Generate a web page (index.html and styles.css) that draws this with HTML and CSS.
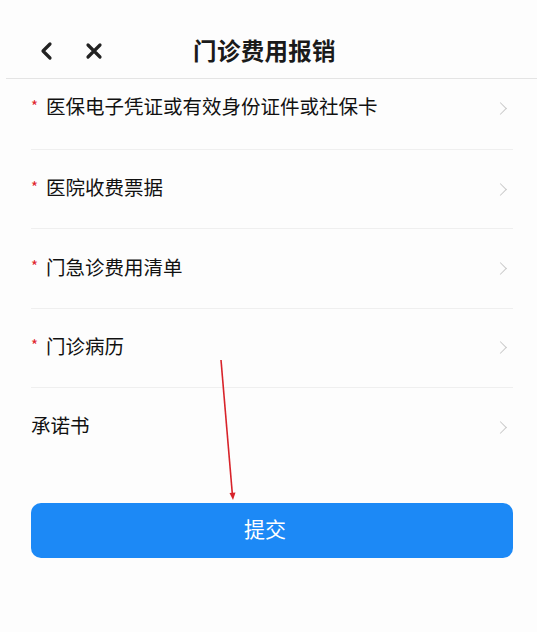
FILE: index.html
```html
<!DOCTYPE html>
<html>
<head>
    <meta charset="UTF-8">
    <title>门诊费用报销</title>
    <link rel="stylesheet" href="styles.css">
</head>
<body>
    <div class="page">
        <div class="header">
            <div class="nav">
                <svg class="nav-icon" width="18" height="20" viewBox="0 0 18 20">
                    <path d="M12 3 L5 10 L12 17" fill="none" stroke="#222" stroke-width="3.2" stroke-linecap="round" stroke-linejoin="round"/>
                </svg>
                <svg class="nav-icon" width="20" height="20" viewBox="0 0 20 20">
                    <path d="M4 4 L16 16 M16 4 L4 16" fill="none" stroke="#222" stroke-width="3.2" stroke-linecap="round"/>
                </svg>
            </div>
            <h1 class="title">门诊费用报销</h1>
            <div></div>
        </div>

        <ul class="list">
            <li class="row row-first"><span class="label"><i class="req">*</i>医保电子凭证或有效身份证件或社保卡</span><span class="chev"></span></li>
            <li class="row"><span class="label"><i class="req">*</i>医院收费票据</span><span class="chev"></span></li>
            <li class="row"><span class="label"><i class="req">*</i>门急诊费用清单</span><span class="chev"></span></li>
            <li class="row"><span class="label"><i class="req">*</i>门诊病历</span><span class="chev"></span></li>
            <li class="row"><span class="label">承诺书</span><span class="chev"></span></li>
        </ul>

        <button class="submit">提交</button>

        <!-- red annotation arrow drawn over the page -->
        <svg class="mark" width="537" height="632" viewBox="0 0 537 632">
            <path d="M221 360 L232.5 496" stroke="#d8232a" stroke-width="1.6" fill="none"/>
            <path d="M229.5 493 L233 500 L235.5 492.5 Z" fill="#d8232a"/>
        </svg>
    </div>
</body>
</html>
```

FILE: styles.css
```css
* {
    margin: 0;
    padding: 0;
    box-sizing: border-box;
}

body {
    background: #fdfdfd;
    color: #1a1a1a;
    font-family: "Noto Sans CJK SC", "Noto Sans", sans-serif;
    width: 537px;
    height: 632px;
    overflow: hidden;
}

.page {
    position: relative;
    height: 100%;
}

.header {
    height: 79px;
    margin-left: 6px;
    border-bottom: 1px solid #e4e4e4;
    display: grid;
    grid-template-columns: 1fr auto 1fr;
    align-items: center;
    padding-top: 24px;
}

.nav {
    display: flex;
    align-items: center;
    gap: 28px;
    padding-left: 32px;
}

.title {
    font-size: 23.5px;
    font-weight: 700;
    line-height: 1;
    color: #1a1a1a;
    letter-spacing: 0.3px;
    margin-right: 14px;
}

.list {
    list-style: none;
    margin: 0 24px 0 31px;
}

.row {
    height: 79.3px;
    display: flex;
    align-items: center;
    justify-content: space-between;
    border-top: 1px solid #efefef;
    padding-right: 8px;
    padding-bottom: 4px;
}

.row-first {
    height: 70px;
    padding-bottom: 16px;
    border-top: none;
}

.label {
    font-size: 19.5px;
    line-height: 1;
    color: #111;
    display: flex;
    align-items: center;
}

.req {
    font-style: normal;
    color: #e0242b;
    font-size: 15px;
    width: 15px;
    margin-top: -2px;
}

.chev {
    width: 9px;
    height: 9px;
    border-top: 1.5px solid #c9c9c9;
    border-right: 1.5px solid #c9c9c9;
    transform: rotate(45deg);
    margin-top: 4px;
}

.submit {
    display: block;
    margin: 37px 24px 0 31px;
    width: 482px;
    height: 55px;
    border: none;
    border-radius: 10px;
    background: #1c89f6;
    color: #fff;
    font-family: inherit;
    font-size: 21px;
    line-height: 1;
    padding: 0 14px 5px 0;
}

.mark {
    position: absolute;
    top: 0;
    left: 0;
    pointer-events: none;
}
```
